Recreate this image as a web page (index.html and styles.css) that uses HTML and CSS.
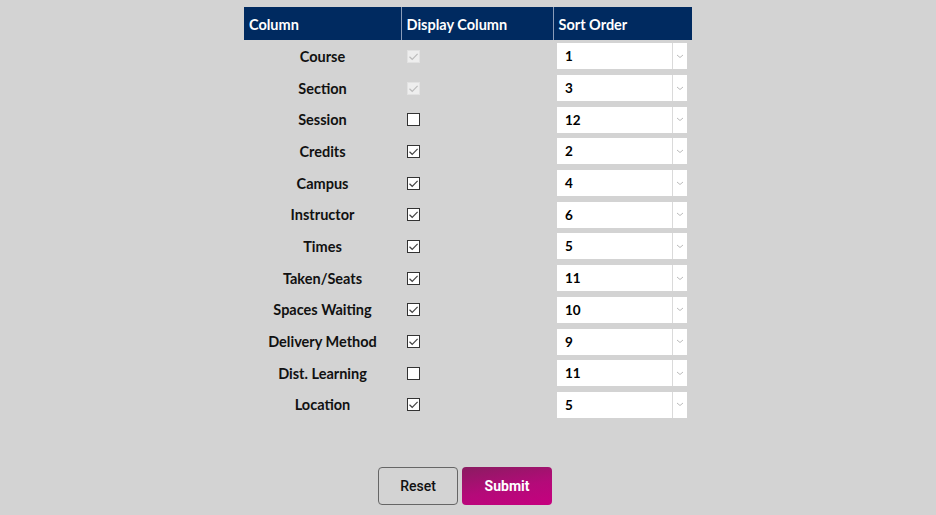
FILE: index.html
```html
<!DOCTYPE html>
<html>
<head>
<meta charset="utf-8">
<link rel="stylesheet" href="styles.css">
</head>
<body>
<div class="page">
  <table class="cols">
    <colgroup><col class="c1"><col class="c2"><col class="c3"></colgroup>
    <thead>
      <tr><th>Column</th><th>Display Column</th><th>Sort Order</th></tr>
    </thead>
    <tbody id="rows"></tbody>
  </table>
  <div class="actions">
    <button class="btn reset">Reset</button>
    <button class="btn submit">Submit</button>
  </div>
</div>
<script src="app.js"></script>
</body>
</html>
```
FILE: app.js
```js
var data = [
  ["Course", "dis", "1"],
  ["Section", "dis", "3"],
  ["Session", "off", "12"],
  ["Credits", "on", "2"],
  ["Campus", "on", "4"],
  ["Instructor", "on", "6"],
  ["Times", "on", "5"],
  ["Taken/Seats", "on", "11"],
  ["Spaces Waiting", "on", "10"],
  ["Delivery Method", "on", "9"],
  ["Dist. Learning", "off", "11"],
  ["Location", "on", "5"]
];
var tick = '<svg viewBox="0 0 13 13" width="13" height="13"><path d="M2.5 6.8 L5.2 9.3 L10.6 3.8" fill="none" stroke-width="1.2"/></svg>';
var html = "";
data.forEach(function (r) {
  html += '<tr><td class="name">' + r[0] + '</td>' +
    '<td class="chk"><span class="box ' + r[1] + '">' + (r[1] === "off" ? "" : tick) + '</span></td>' +
    '<td class="sel"><div class="select"><span class="val">' + r[2] + '</span>' +
    '<span class="arrow"><svg viewBox="0 0 8 5" width="8" height="5"><path d="M1 1 L4 3.5 L7 1" fill="none" stroke="#bbb" stroke-width="1"/></svg></span></div></td></tr>';
});
document.getElementById("rows").innerHTML = html;
```
FILE: styles.css
```css
html, body {
  margin: 0;
  padding: 0;
  background: #d3d3d3;
}
.page {
  padding-top: 7px;
  display: flex;
  flex-direction: column;
  align-items: center;
}
.cols {
  border-collapse: collapse;
  table-layout: fixed;
  width: 448px;
  font-family: Lato, "Open Sans", sans-serif;
  font-weight: 700;
  font-size: 14.5px;
  color: #111;
}
.c1 { width: 157px; }
.c2 { width: 152px; }
.c3 { width: 139px; }
.cols th {
  background: #002a60;
  color: #fff;
  height: 32px;
  padding: 1px 5px 0;
  text-align: left;
  font-weight: 700;
  font-size: 14.5px;
  border-left: 1px solid #8a9cb8;
}
.cols th:first-child { border-left: none; }
.cols td {
  height: 30.7px;
  padding: 1px 0 0;
}
.name { text-align: center; }
.chk { padding-left: 6px !important; }
.box {
  display: block;
  width: 11px;
  height: 11px;
  border: 1px solid #333;
  background: #fff;
  position: relative;
}
.box svg {
  position: absolute;
  left: -1px;
  top: -1px;
  stroke: #444;
}
.box.dis {
  border-color: #e2e2e2;
  background: #eeeeee;
}
.box.dis svg { stroke: #bdbdbd; }
.sel { padding-left: 4px !important; }
.select {
  width: 130px;
  height: 26px;
  background: #fff;
  display: flex;
  align-items: center;
}
.val {
  flex: 1;
  padding-left: 8px;
  font-size: 13.5px;
  color: #000;
  border-right: 1px solid #dadada;
  height: 26px;
  line-height: 27px;
}
.arrow {
  width: 14px;
  display: flex;
  justify-content: center;
  align-items: center;
  height: 26px;
}
.actions {
  margin-top: 47px;
  display: flex;
  gap: 4px;
  margin-right: 6px;
}
.btn {
  height: 38px;
  border-radius: 4px;
  font-family: Roboto, "Liberation Sans", sans-serif;
  font-size: 14px;
  cursor: pointer;
}
.reset {
  width: 80px;
  background: #d3d3d3;
  border: 1px solid #666;
  color: #111;
  font-weight: 500;
}
.submit {
  width: 90px;
  border: none;
  color: #fff;
  font-weight: 700;
  background: linear-gradient(170deg, #8a1c61 0%, #b40a79 55%, #c6007f 100%);
}
```
